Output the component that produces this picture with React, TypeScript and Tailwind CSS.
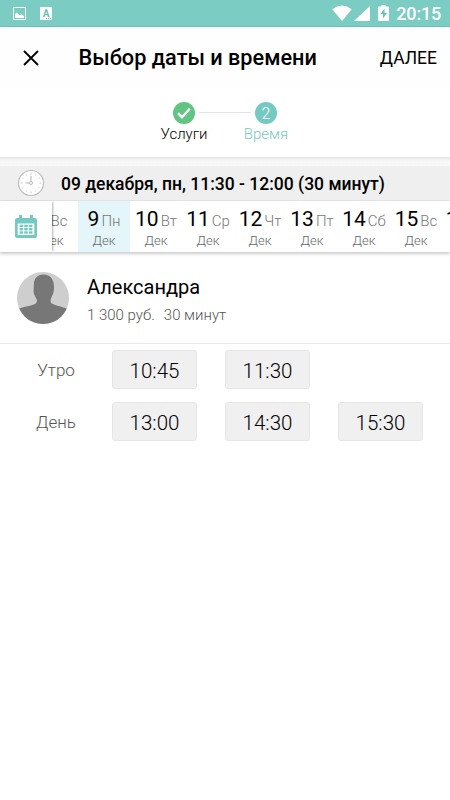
type Day = { num: number; weekday: string; active?: boolean };

const days: Day[] = [
  { num: 8, weekday: "Вс" },
  { num: 9, weekday: "Пн", active: true },
  { num: 10, weekday: "Вт" },
  { num: 11, weekday: "Ср" },
  { num: 12, weekday: "Чт" },
  { num: 13, weekday: "Пт" },
  { num: 14, weekday: "Сб" },
  { num: 15, weekday: "Вс" },
  { num: 16, weekday: "Пн" },
];

const slots = [
  { label: "Утро", times: ["10:45", "11:30"] },
  { label: "День", times: ["13:00", "14:30", "15:30"] },
];

function StatusBar() {
  return (
    <div className="flex h-[27px] items-center border-b border-[#66c3b8] bg-[#7bccc3] text-white">
      <svg className="mt-px ml-[13px] h-[13px] w-[13px]" viewBox="0 0 13 13" fill="none">
        <rect x="0.5" y="0.5" width="12" height="12" stroke="white" />
        <path d="M2 11V7L4 5.500l2.500 2.500L9 7.500l2 1.500v2z" fill="white" />
      </svg>
      <div className="relative mt-px ml-[14px] h-[13px] w-[12px] rounded-[1px] bg-white text-center text-[10px] leading-[13px] font-bold text-[#66c3b8]">
        A
        <span className="absolute right-[1px] bottom-[1px] h-px w-[5px] border-b border-dotted border-[#7bccc3]" />
      </div>
      <svg className="ml-auto h-[16px] w-[20px]" viewBox="0 0 20 16" fill="white">
        <path d="M0.3 4.2Q10-3 19.7 4.2L10 16z" />
      </svg>
      <svg className="ml-[2px] h-[15px] w-[16px]" viewBox="0 0 16 15" fill="white">
        <path d="M16 0v15H0z" />
      </svg>
      <svg className="ml-[8px] h-[16px] w-[11px]" viewBox="0 0 11 16">
        <path d="M3.500 0h4v1.500H10q1 0 1 1V15q0 1-1 1H1q-1 0-1-1V2.500q0-1 1-1h2.500z" fill="white" />
        <path d="M6.600 3.500L2.200 9.300h2.800V13.500L9 7.800H6.400z" fill="#66c3b8" />
      </svg>
      <span className="mt-[2px] mr-[9px] ml-[7px] text-[18px] leading-none font-medium tracking-[-0.2px]">20:15</span>
    </div>
  );
}

function Header() {
  return (
    <header className="flex h-[61px] items-center bg-[#fefefe] text-black">
      <svg className="ml-[23px] h-[16px] w-[16px]" viewBox="0 0 16 16" stroke="black" strokeWidth="1.8">
        <path d="M1 1l14 14M15 1L1 15" />
      </svg>
      <h1 className="mt-[2px] ml-[39.500px] text-[21.700px] font-medium whitespace-nowrap">Выбор даты и времени</h1>
      <button className="mt-px mr-[13px] ml-auto text-[17.500px]">ДАЛЕЕ</button>
    </header>
  );
}

function Steps() {
  return (
    <div className="flex h-[69px] justify-center pt-[14px]">
      <div className="flex w-[54px] flex-col items-center">
        <svg className="h-[22px] w-[22px]" viewBox="0 0 22 22" fill="none">
          <circle cx="11" cy="11" r="11" fill="#5fc581" />
          <path d="M5 11.2l4 4 7.8-8.4" stroke="white" strokeWidth="2.4" />
        </svg>
        <span className="text-[15px] leading-[20px] font-light text-black">Услуги</span>
      </div>
      <div className="-mx-[12px] mt-[10px] h-px w-[52px] bg-[#e3e3e3]" />
      <div className="flex w-[54px] flex-col items-center">
        <span className="flex h-[22px] w-[22px] items-center justify-center rounded-full bg-[#74cac2] pt-px text-[16px] font-light text-white">2</span>
        <span className="text-[15px] leading-[20px] font-light text-[#74cac2]">Время</span>
      </div>
    </div>
  );
}

function ClockIcon() {
  const ticks = Array.from({ length: 12 }, (_, i) => i * 30);
  return (
    <svg className="h-[28px] w-[28px]" viewBox="0 0 28 28" fill="none" stroke="#bcbcbc">
      <circle cx="14" cy="14" r="12.5" fill="white" strokeWidth="1.2" />
      {ticks.map((deg) => (
        <path key={deg} d="M14 4v1.4" strokeWidth={deg % 90 ? 0.7 : 1} transform={`rotate(${deg} 14 14)`} />
      ))}
      <path d="M14 7v5.500M8.500 14h4" stroke="#b4b4b4" />
      <circle cx="14" cy="14" r="1.5" />
    </svg>
  );
}

function CalendarIcon() {
  return (
    <svg className="h-[23px] w-[22px]" viewBox="0 0 22 23" fill="#74cac2">
      <path d="M2 3h2V0h3v3h8V0h3v3h2q2 0 2 2v16q0 2-2 2H2q-2 0-2-2V5q0-2 2-2z" />
      <path d="M2.700 8.500h16.600v11.500H2.700z" fill="white" />
      {[4.6, 9.2, 13.8].map((x) =>
        [9.7, 13, 16.3].map((y) => <rect key={`${x}-${y}`} x={x} y={y} width="3.6" height="2.4" />)
      )}
    </svg>
  );
}

function DayCell({ day }: { day: Day }) {
  return (
    <div className={["w-[52px] shrink-0 pt-[6px] text-center", day.active ? "bg-[#e4f6f9]" : ""].join(" ")}>
      <div className="flex items-baseline justify-center gap-[2px] leading-[24px]">
        <span className="text-[21px] text-black">{day.num}</span>
        <span className="text-[15px] font-light text-[#777]">{day.weekday}</span>
      </div>
      <div className="text-[13px] leading-[15px] font-light text-[#666]">Дек</div>
    </div>
  );
}

export default function App() {
  return (
    <div className="h-[800px] w-[450px] overflow-hidden bg-white font-['Roboto',sans-serif]">
      <StatusBar />
      <Header />
      <Steps />

      {/* Shadow under the steps */}
      <div className="h-[9px] bg-linear-to-b from-[#e4e4e4] via-[#f6f6f6] via-40% to-[#fafafa]" />

      {/* Selected date */}
      <div className="flex h-[35px] items-center border-b border-[#e4e4e4] bg-[#efefef]">
        <div className="ml-[17px]">
          <ClockIcon />
        </div>
        <span className="mt-[3px] ml-[16px] text-[17.500px] font-medium whitespace-nowrap text-black">
          09 декабря, пн, 11:30 - 12:00 (30 минут)
        </span>
      </div>

      {/* Day strip */}
      <div className="flex h-[51px] bg-white shadow-[0_2px_3px_rgba(0,0,0,0.2)]">
        <div className="z-10 flex w-[52px] shrink-0 items-center justify-center bg-white shadow-[2px_0_2px_-1px_rgba(0,0,0,0.3)]">
          <CalendarIcon />
        </div>
        <div className="-ml-[26px] flex min-w-0 flex-1 overflow-hidden">
          {days.map((day) => (
            <DayCell key={day.num} day={day} />
          ))}
        </div>
      </div>

      {/* Master */}
      <div className="flex h-[92px] border-b border-[#e8e8e8] pt-[20px] pl-[17px]">
        <svg className="h-[52px] w-[52px] shrink-0" viewBox="0 0 52 52">
          <defs>
            <clipPath id="avatar">
              <circle cx="26" cy="26" r="26" />
            </clipPath>
          </defs>
          <g clipPath="url(#avatar)">
            <path d="M0 0h52v52H0z" fill="#cecece" />
            <path
              d="M26.500 2.500C20.500 2.500 17 6.500 16.900 12L16.600 20Q17 23.500 19 26C20.500 28.500 20.200 30.500 18 32C13 34.500 6 34.500 0 37.500V52H52V37.500C46 34.500 39 34 34.700 31.500C33 30 33.500 27 34.600 25C36.300 22 37 19 37 15C37 7.500 33.500 2.500 26.500 2.500z"
              fill="#777"
            />
          </g>
        </svg>
        <div className="ml-[18px] pt-[2px]">
          <div className="text-[20px] leading-[26px] text-black">Александра</div>
          <div className="mt-[5px] text-[15px] leading-[20px] font-light text-[#555]">
            <span>1 300 руб.</span>
            <span className="ml-[9px]">30 минут</span>
          </div>
        </div>
      </div>

      {/* Free time */}
      <div className="flex flex-col gap-[13px] pt-[6px]">
        {slots.map((row) => (
          <div key={row.label} className="flex h-[39px] items-center">
            <div className="w-[112px] pt-[3px] text-center text-[17px] font-light text-[#555]">{row.label}</div>
            <div className="flex gap-[28px]">
              {row.times.map((time) => (
                <button
                  key={time}
                  className="h-[39px] w-[85px] rounded-[3px] border border-[#e6e6e6] bg-[#f0f0f0] pt-[4px] text-[20.500px] font-light text-black"
                >
                  {time}
                </button>
              ))}
            </div>
          </div>
        ))}
      </div>
    </div>
  );
}
